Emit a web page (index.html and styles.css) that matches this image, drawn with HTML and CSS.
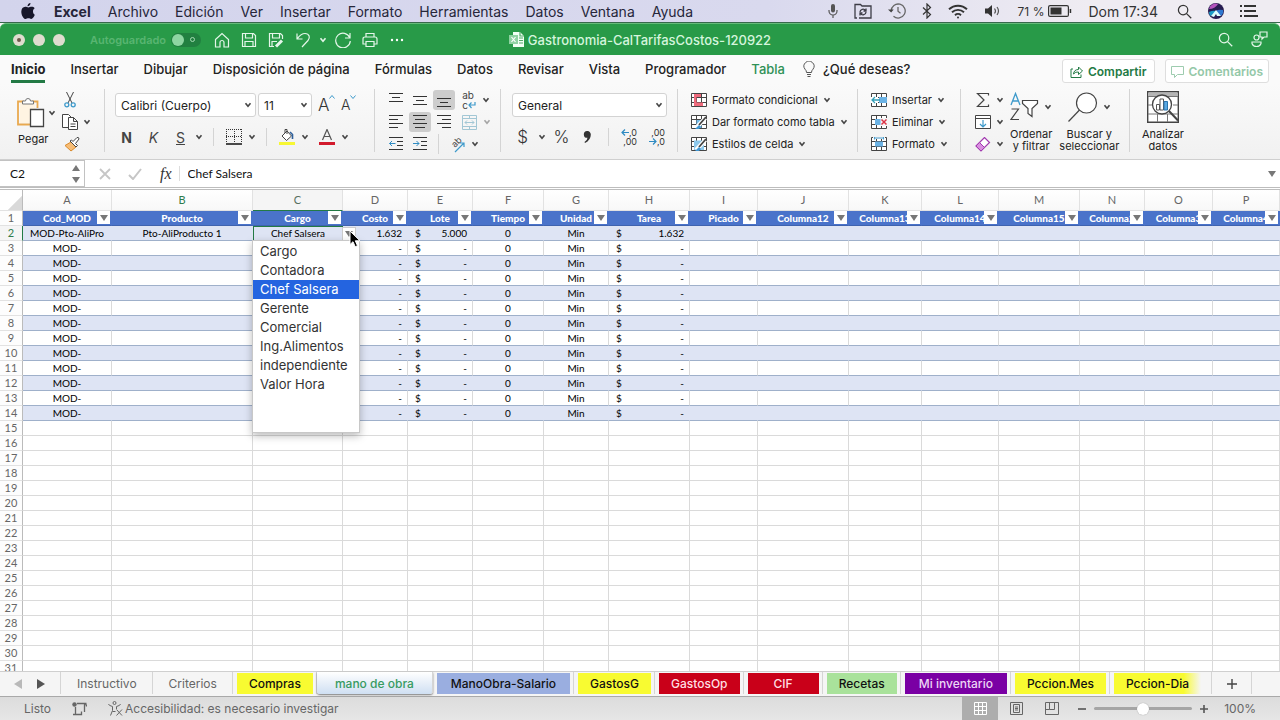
FILE: index.html
```html
<!DOCTYPE html>
<html lang="es">
<head>
<meta charset="utf-8">
<title>Gastronomia-CalTarifasCostos-120922</title>
<link rel="stylesheet" href="styles.css">
</head>
<body>
<svg class="defs" aria-hidden="true">
  <symbol id="chev" viewBox="0 0 8 6"><path d="M1.5 1.2 4 4.2 6.5 1.2" fill="none" stroke="currentColor" stroke-width="1.6"/></symbol>
  <symbol id="tri" viewBox="0 0 8 6"><path d="M0 0h8L4 6z" fill="currentColor"/></symbol>
  <symbol id="lens" viewBox="0 0 16 16"><g fill="none" stroke="currentColor" stroke-width="1.3"><circle cx="6.5" cy="6.5" r="5"/><path d="m10.200 10.200 5 5"/></g></symbol>
  <symbol id="table" viewBox="0 0 16 14"><path d="M.5.5h15v13H.5zM.5 4.500h15M.5 9.500h15M5.500.5v13M10.500.5v13" fill="#fff" stroke="#444"/></symbol>
</svg>

<nav class="menubar" aria-label="Barra de menús">
  <svg class="apple" viewBox="0 0 14 16" width="14" height="16"><path d="M9.500 0c.1 1.700-1.300 3.300-3 3.300C6.300 1.700 7.900.2 9.500 0zM12 8.400c0-1.500.8-2.500 1.700-3.100C12.900 4.200 11.800 3.800 10.800 3.800 9.300 3.800 8.300 4.500 7.400 4.500 6.500 4.500 5.400 3.800 4.200 3.800 2 3.900.3 5.700.3 8.700.3 12.300 2.800 16 4.600 16 5.600 16 6.200 15.300 7.500 15.300S9.200 16 10.200 16c1.500 0 2.900-2.200 3.600-4.200C12.700 11.200 12 10 12 8.400z" fill="#17172a"/></svg>
  <button class="app">Excel</button><button>Archivo</button><button>Edición</button><button>Ver</button><button>Insertar</button><button>Formato</button><button>Herramientas</button><button>Datos</button><button>Ventana</button><button>Ayuda</button>
  <div class="tray">
    <svg viewBox="0 0 10 14" width="10" height="14"><rect x="3" width="4" height="8.500" rx="2" fill="#555"/><path d="M1 6v1a4 4 0 0 0 8 0V6M5 11v3" fill="none" stroke="#555" stroke-width="1.200"/></svg>
    <svg viewBox="0 0 18 16" width="18" height="16" fill="none" stroke="#3c3c46" stroke-width="1.300"><path d="M3 15H1V1.500h5.500L8 3h9v12H5"/><path d="M6 9a3 3 0 0 1 5.500-1.500M12 9a3 3 0 0 1-5.500 1.500M12 5.500v2.500H9.500M6 12.500V10h2.500"/></svg>
    <svg viewBox="0 0 18 16" width="18" height="16" fill="none" stroke="#666" stroke-width="1.300"><path d="M3.200 8A7 7 0 1 1 5.500 13.200M10 4v4.300l2.500 2"/><path d="m0 6.500 3.200 3 2.500-3z" fill="#444" stroke="none"/></svg>
    <svg viewBox="0 0 10 16" width="10" height="16" fill="none" stroke="#333" stroke-width="1.200"><path d="m1 4.500 7.500 7L5 15V1l3.500 3.500L1 11.500"/></svg>
    <svg viewBox="0 0 20 15" width="20" height="15" fill="none" stroke="#333" stroke-width="1.900"><path d="M1 5.300a13 13 0 0 1 18 0M4 8.300a8.700 8.700 0 0 1 12 0M7 11.200a4.400 4.400 0 0 1 6 0"/><circle cx="10" cy="13.500" r="1" fill="#333" stroke="none"/></svg>
    <svg viewBox="0 0 18 14" width="18" height="14"><path d="M1 4.500h3L8 1v12L4 9.500H1z" fill="#333"/><path d="M10.500 4.500q2 2.500 0 5M13 3q3 4 0 8" fill="none" stroke="#555" stroke-width="1.200"/></svg>
    <span class="pct">71 %</span>
    <svg viewBox="0 0 24 12" width="24" height="12"><rect x=".6" y=".6" width="19.800" height="10.800" rx="1.500" fill="none" stroke="#333" stroke-width="1.200"/><path d="M2.500 2.500h11v7h-11zM21.700 4h1.500v4h-1.500z" fill="#333"/></svg>
    <span class="clock">Dom 17:34</span>
    <svg class="lens" width="15" height="15"><use href="#lens"/></svg>
    <svg viewBox="0 0 16 16" width="16" height="16"><circle cx="8" cy="8" r="8" fill="#271c50"/><path d="M1 6a7 7 0 0 1 9-5q-3 5-9 5z" fill="#b353bd"/><path d="M15 7q-5-1-7 1l5 5q3-3 2-6z" fill="#2f78d0"/><path d="M1 9q4-2 7-1l-5 5Q1 12 1 9z" fill="#1a9bc7"/><path d="m8 7 5 6H9l-1-2-2 3-3-1z" fill="#dff"/></svg>
    <svg viewBox="0 0 18 12" width="18" height="12"><path d="M0 1h2M0 6h2M0 11h2M4 1h12M4 6h12M4 11h14" stroke="#333" stroke-width="2"/></svg>
  </div>
</nav>

<div class="window">
<header class="titlebar">
  <div class="quick">
    <div class="lights"><button class="light edited" aria-label="Cerrar"></button><button class="light" aria-label="Minimizar"></button><button class="light" aria-label="Ampliar"></button></div>
    <span class="autosave">Autoguardado</span>
    <button class="toggle" role="switch" aria-checked="false" aria-label="Autoguardado"><span class="knob"></span><span class="off"></span></button>
    <div class="actions">
    <button aria-label="Inicio"><svg viewBox="0 0 16 16" width="16" height="16"><path d="M1.500 7.500 8 1.500l6.500 6V15H10v-4.500a2 2 0 0 0-4 0V15H1.500z"/></svg></button>
    <button aria-label="Guardar"><svg viewBox="0 0 16 16" width="16" height="16"><path d="M1.500 1.500h11l2 2v11h-13zM4.500 1.500v4.500h7V1.500M4 14.500V9.500h8v5"/></svg></button>
    <button aria-label="Guardar como"><svg viewBox="0 0 16 16" width="16" height="16"><path d="M6 14.500H1.500v-13h11l2 2V7M4.500 1.500v4.500h7V1.500M4 14V9.500h5"/><path d="m8 14.500 6-6" stroke-width="3"/></svg></button>
    <button aria-label="Deshacer"><svg viewBox="0 0 16 16" width="16" height="16"><path d="M2 1.500V7h5.500M2.300 6.700C5 3 7.500 1.500 10 1.500c4.500 0 5.500 4.500 3 7L7 15"/></svg></button>
    <button class="narrow" aria-label="Opciones de deshacer"><svg width="8" height="6"><use href="#chev"/></svg></button>
    <button aria-label="Rehacer"><svg viewBox="0 0 18 16" width="18" height="16"><path d="M16 1v5h-5M15.800 5.800A7.300 7.300 0 1 0 16.300 9"/></svg></button>
    <button aria-label="Imprimir"><svg viewBox="0 0 16 16" width="16" height="16"><path d="M4 5V1.500h8V5M4 12H1V7q0-2 2-2h10q2 0 2 2v5h-3M4 9.500h8v5H4z"/></svg></button>
    <button aria-label="Más"><svg viewBox="0 0 16 4" width="16" height="4"><g fill="#fff" stroke="none"><circle cx="3" cy="2" r="1.200"/><circle cx="8" cy="2" r="1.200"/><circle cx="13" cy="2" r="1.200"/></g></svg></button>
    </div>
  </div>
  <h1><svg viewBox="0 0 15 15" width="15" height="15"><path d="M4 0h7l4 4v11H4z" fill="#f1fff4"/><path d="M11 0v4h4M10 6h4M10 8.500h4M10 11h4" fill="none" stroke="#52a96a"/><path d="M0 3h9v9H0z" fill="#8fd2a2"/><path d="m2.500 5 4 5M6.500 5l-4 5" stroke="#fff"/></svg>Gastronomia-CalTarifasCostos-120922</h1>
  <div class="right">
    <button aria-label="Buscar"><svg width="15" height="15"><use href="#lens"/></svg></button>
    <button aria-label="Colaborar"><svg viewBox="0 0 17 17" width="17" height="17"><circle cx="5.500" cy="6.500" r="2.500"/><path d="M1 11h9v1.500q-1 3-4.500 3T1 12.500zM9 1h7v5h-3l-2 2V6H9z"/></svg></button>
  </div>
</header>

<nav class="tabs" aria-label="Cinta">
  <button class="current">Inicio</button><button>Insertar</button><button>Dibujar</button><button>Disposición de página</button><button>Fórmulas</button><button>Datos</button><button>Revisar</button><button>Vista</button><button>Programador</button><button class="context">Tabla</button>
  <button class="tell"><svg viewBox="0 0 12 16" width="12" height="16" fill="none" stroke="#555"><path d="M3.500 11.500q0-2-1.500-3.300a5 5 0 1 1 8 0Q8.500 9.500 8.500 11.500zM4 13.500h4M4.500 15.500h3"/></svg>¿Qué deseas?</button>
  <div class="share">
    <button><svg viewBox="0 0 13 13" width="13" height="13" fill="none" stroke="#237a45"><path d="M3 4H1v8.500h10V9.500M3.500 9Q4 4.500 8.500 4.500V2l4 4-4 3.500V7Q5.500 6.500 3.500 9z"/></svg>Compartir</button>
    <button class="dim"><svg viewBox="0 0 13 13" width="13" height="13" fill="none" stroke="#9dccaf"><path d="M.5 1.500h12v8h-6l-3 3v-3h-3z"/></svg>Comentarios</button>
  </div>
</nav>

<div class="ribbon">
  <section class="group clip">
    <button class="big"><span class="pic"><svg viewBox="0 0 28 31" width="28" height="31"><path d="M7 4.500H1v23h12M15 4.500h5.500V11" fill="none" stroke="#e9a94f" stroke-width="1.800"/><path d="M3 6h15v6h-5v14H3z" fill="#fff4e2"/><path d="M5.500 7V4h3a2.500 2.500 0 0 1 5 0h3v3z" fill="#fff" stroke="#777"/><path d="M13.500 12.500h13v17h-13z" fill="#fff" stroke="#444" stroke-width="1.300"/></svg><svg class="c" width="8" height="6"><use href="#chev"/></svg></span>Pegar</button>
    <div class="stack">
      <button aria-label="Cortar"><svg viewBox="0 0 12 16" width="12" height="16" fill="none"><path d="M2.500 0 8 11M9.500 0 4 11" stroke="#444"/><g stroke="#3e9acb" stroke-width="1.300"><circle cx="2.800" cy="12.800" r="2"/><circle cx="9.200" cy="12.800" r="2"/></g></svg></button>
      <button aria-label="Copiar"><svg viewBox="0 0 16 16" width="16" height="16" fill="#fff" stroke="#444"><path d="M6 13.500H.5V.5h6L9 3"/><path d="M6.500 3.500h5l4 4v8h-9zM11.500 3.500v4h4M8.500 10h5M8.500 12.500h5"/></svg><svg class="c" width="8" height="6"><use href="#chev"/></svg></button>
      <button aria-label="Copiar formato"><svg viewBox="0 0 16 16" width="16" height="16"><path d="M1 9.500 7 6l5 5-5 4z" fill="#f7bd76" stroke="#d98a2c"/><path d="m6 5 6 6 1.500-1.500-2-2L15 3q0-2-2-1.500L9 5.500 7.500 4z" fill="#fff" stroke="#444"/></svg></button>
    </div>
  </section>

  <section class="group font">
    <div class="line">
      <label class="pick face"><select aria-label="Fuente"><option>Calibri (Cuerpo)</option></select><svg width="8" height="6"><use href="#chev"/></svg></label>
      <label class="pick size"><select aria-label="Tamaño"><option>11</option></select><svg width="8" height="6"><use href="#chev"/></svg></label>
      <button class="grow" aria-label="Aumentar tamaño"><span class="cap">A</span><svg viewBox="0 0 6 4" width="6" height="4"><path d="m.5 3.500 2.500-3 2.500 3" fill="none" stroke="#3e9acb"/></svg></button>
      <button class="grow" aria-label="Reducir tamaño"><span class="cap small">A</span><svg viewBox="0 0 6 4" width="6" height="4"><path d="m.5.5 2.500 3 2.500-3" fill="none" stroke="#3e9acb"/></svg></button>
    </div>
    <div class="line marks">
      <button class="glyph bold">N</button><button class="glyph ital">K</button><button class="glyph under">S</button><button class="more" aria-label="Subrayados"><svg width="8" height="6"><use href="#chev"/></svg></button>
      <i class="bar"></i>
      <button aria-label="Bordes" class="pair"><svg viewBox="0 0 16 16" width="16" height="16"><path d="M.5 0v14M8.500 0v14M15.500 0v14M0 .5h16M0 7.500h16" stroke="#333" stroke-dasharray="1 1"/><path d="M0 15h16" stroke="#111" stroke-width="1.500"/></svg><svg width="8" height="6"><use href="#chev"/></svg></button>
      <i class="bar"></i>
      <button aria-label="Relleno" class="pair"><svg viewBox="0 0 16 17" width="16" height="17"><path d="M0 13h16v3H0z" fill="#f7f733"/><path d="m3 7 5-5 4.500 5-5 4.500zM6 4V.5h2V5" fill="#fff" stroke="#444"/><path d="M13.500 10V5.500L11 3" stroke="#2d5f9b" stroke-width="1.600" fill="none"/></svg><svg width="8" height="6"><use href="#chev"/></svg></button>
      <button aria-label="Color de fuente" class="pair"><svg viewBox="0 0 16 17" width="16" height="17"><path d="M0 13h16v3H0z" fill="#d21a2c"/><path d="m3.500 11 4.500-10.500L12.500 11M5.200 7.500h5.600" fill="none" stroke="#555" stroke-width="1.200"/></svg><svg width="8" height="6"><use href="#chev"/></svg></button>
    </div>
  </section>

  <section class="group align">
    <button aria-label="Arriba"><svg viewBox="0 0 14 14" width="14" height="14"><path d="M0 .5h14M3 4.500h8M0 8.500h14" stroke="#333"/></svg></button>
    <button aria-label="Medio"><svg viewBox="0 0 14 14" width="14" height="14"><path d="M0 3.500h14M3 7.500h8M0 11.500h14" stroke="#333"/></svg></button>
    <button class="on" aria-label="Abajo"><svg viewBox="0 0 14 14" width="14" height="14"><path d="M0 5.500h14M3 9.500h8M0 13.500h14" stroke="#333"/></svg></button>
    <button class="wrap pair" aria-label="Ajustar texto"><span class="abc"><span>ab</span><span>c<svg viewBox="0 0 8 7" width="8" height="7"><path d="M7 0v3H1M3.500.5 1 3l2.500 3" fill="none" stroke="#3e9acb" stroke-width="1.200"/></svg></span></span><svg width="8" height="6"><use href="#chev"/></svg></button>
    <button aria-label="Izquierda"><svg viewBox="0 0 14 14" width="14" height="14"><path d="M0 .5h14M0 4.500h9M0 8.500h14M0 12.500h9" stroke="#333"/></svg></button>
    <button class="on" aria-label="Centrar"><svg viewBox="0 0 14 14" width="14" height="14"><path d="M0 .5h14M2 4.500h10M0 8.500h14M2 12.500h10" stroke="#333"/></svg></button>
    <button aria-label="Derecha"><svg viewBox="0 0 14 14" width="14" height="14"><path d="M0 .5h14M5 4.500h9M0 8.500h14M5 12.500h9" stroke="#333"/></svg></button>
    <button class="pair faded" aria-label="Combinar"><svg viewBox="0 0 15 15" width="15" height="15" fill="none" stroke="#3e8fae"><path d="M.5.5h14v14H.5zM.5 3.500h14M.5 11.500h14M7.500.5v3M7.500 11.500v3M3 7.500h9M5 5.500l-2 2 2 2M10 5.500l2 2-2 2"/></svg><svg width="8" height="6"><use href="#chev"/></svg></button>
    <button aria-label="Reducir sangría"><svg viewBox="0 0 14 14" width="14" height="14"><path d="M0 .5h14M8 4.500h6M8 8.500h6M0 12.500h14" stroke="#333"/><path d="M6.500 6.500h-6M3 4 .5 6.500 3 9" fill="none" stroke="#2f8bc2"/></svg></button>
    <button aria-label="Aumentar sangría"><svg viewBox="0 0 14 14" width="14" height="14"><path d="M0 .5h14M8 4.500h6M8 8.500h6M0 12.500h14" stroke="#333"/><path d="M0 6.500h6M3.500 4 6 6.500 3.500 9" fill="none" stroke="#2f8bc2"/></svg></button>
    <button class="orient pair" aria-label="Orientación"><svg viewBox="0 0 18 18" width="18" height="18"><text x="0" y="0" transform="translate(8 13) rotate(-45)" font-size="9" fill="#444">ab</text><path d="M8 17 16.500 8.500M13 8h4v4" fill="none" stroke="#3e9acb" stroke-width="1.200"/></svg><svg width="8" height="6"><use href="#chev"/></svg></button>
  </section>

  <section class="group number">
    <label class="pick wide"><select aria-label="Formato de número"><option>General</option></select><svg width="8" height="6"><use href="#chev"/></svg></label>
    <div class="line">
      <button class="sym">$</button><button aria-label="Monedas"><svg width="8" height="6"><use href="#chev"/></svg></button><button class="sym">%</button><button aria-label="Millares" class="comma"><svg viewBox="0 0 8 12" width="8" height="12"><path d="M4 0a3.500 3.500 0 0 1 3.800 3.700Q7.800 9 2 12L1.500 11Q4.500 9 4.500 6.800A3.400 3.400 0 1 1 4 0z" fill="#333"/></svg></button>
      <i class="bar"></i>
      <button class="dec" aria-label="Más decimales"><span><svg viewBox="0 0 8 7" width="8" height="7"><path d="M8 3.500H1M4 .5l-3 3 3 3" fill="none" stroke="#2f8bc2" stroke-width="1.200"/></svg>,0</span><span>,00</span></button>
      <button class="dec" aria-label="Menos decimales"><span>,00</span><span><svg viewBox="0 0 8 7" width="8" height="7"><path d="M0 3.500h7M4 .5l3 3-3 3" fill="none" stroke="#2f8bc2" stroke-width="1.200"/></svg>,0</span></button>
    </div>
  </section>

  <section class="group list styles">
    <button><svg viewBox="0 0 16 14" width="16" height="14"><use href="#table"/><path d="M3 1h7v3H3zM3 9.500h9V13H3zM3 4h2.500v6H3z" fill="#ef6b7d"/></svg>Formato condicional<svg class="c" width="8" height="6"><use href="#chev"/></svg></button>
    <button><svg viewBox="0 0 16 14" width="16" height="14"><use href="#table"/><path d="M5.500 5h5v8h-5z" fill="#74bbe8"/><path d="m5 13 9.500-10" stroke="#fff" stroke-width="4"/><path d="m8 10 7-8" stroke="#444" stroke-width="1.800"/><path d="m4 14 4-4 2 2q-2 3-6 2z" fill="#3e97d4"/></svg>Dar formato como tabla<svg class="c" width="8" height="6"><use href="#chev"/></svg></button>
    <button><svg viewBox="0 0 16 14" width="16" height="14"><use href="#table"/><path d="M3 3.500h10V13H3z" fill="#8cc8ec"/><path d="m5 13 9.500-10" stroke="#fff" stroke-width="4"/><path d="m8 10 7-8" stroke="#444" stroke-width="1.800"/><path d="m4 14 4-4 2 2q-2 3-6 2z" fill="#3e97d4"/></svg>Estilos de celda<svg class="c" width="8" height="6"><use href="#chev"/></svg></button>
  </section>

  <section class="group list cells">
    <button><svg viewBox="0 0 16 14" width="16" height="14"><use href="#table"/><path d="M8 4h8v6H8z" fill="#6bb2e4"/><path d="M0 4h7v6H0z" fill="#fff"/><path d="M9 7H1M4 4 1 7l3 3" fill="none" stroke="#36a0b8" stroke-width="1.300"/></svg>Insertar<svg class="c" width="8" height="6"><use href="#chev"/></svg></button>
    <button><svg viewBox="0 0 16 14" width="16" height="14"><use href="#table"/><path d="M4 4h6v6H4z" fill="#6bb2e4"/><path d="M9.500 3H16v8H9.500z" fill="#f5f5f5"/><path d="m10.500 4.500 5 5M15.500 4.500l-5 5" stroke="#dc3446" stroke-width="1.500"/></svg>Eliminar<svg class="c" width="8" height="6"><use href="#chev"/></svg></button>
    <button><svg viewBox="0 0 16 14" width="16" height="14"><use href="#table"/><path d="M4 4.500h8v5H4z" fill="#6bb2e4"/><path d="M2 0h12v2H2z" fill="#f5f5f5"/><path d="M3.500 1h9M3.500 0v2.500M12.500 0v2.500" stroke="#4a9fd0"/></svg>Formato<svg class="c" width="8" height="6"><use href="#chev"/></svg></button>
  </section>

  <section class="group edit">
    <div class="stack">
      <button aria-label="Autosuma"><svg viewBox="0 0 16 16" width="16" height="16"><path d="M13.500 3.500V1.500H2.500L9 8l-6.500 6.500h11v-2" fill="none" stroke="#444" stroke-width="1.200"/></svg><svg class="c" width="8" height="6"><use href="#chev"/></svg></button>
      <button aria-label="Rellenar"><svg viewBox="0 0 16 14" width="16" height="14"><path d="M.5.500h15v13H.5zM.5 3.500h15" fill="#fff" stroke="#444"/><path d="M8 5v7M5 9l3 3 3-3" fill="none" stroke="#3e9acb" stroke-width="1.200"/></svg><svg class="c" width="8" height="6"><use href="#chev"/></svg></button>
      <button aria-label="Borrar"><svg viewBox="0 0 16 15" width="16" height="15"><path d="m1 9 8.500-8.500 5 5L6 14z" fill="#fff" stroke="#a23bb0" stroke-width="1.200"/><path d="m1 9 3.500-3.500 5 5L6 14z" fill="#d98fe0" stroke="#a23bb0"/></svg><svg class="c" width="8" height="6"><use href="#chev"/></svg></button>
    </div>
    <button class="big"><span class="pic"><svg viewBox="0 0 29 30" width="29" height="30" fill="none"><path d="m1 13 4.500-11.500L10 13M2.500 9h6" stroke="#3e9acb" stroke-width="1.300"/><path d="M1.500 17h7L1 27.500h8" stroke="#444" stroke-width="1.200"/><path d="M12.500 8.500h15v3l-5.500 5v8l-4-3v-5l-5.500-5z" fill="#fff" stroke="#444" stroke-width="1.200"/></svg><svg class="c" width="8" height="6"><use href="#chev"/></svg></span>Ordenar<br>y filtrar</button>
    <button class="big find"><span class="pic"><svg viewBox="0 0 30 30" width="30" height="30" fill="none" stroke="#444" stroke-width="1.200"><circle cx="18.500" cy="11" r="10" fill="#fff"/><path d="M11.500 18 .5 29.500"/></svg><svg class="c" width="8" height="6"><use href="#chev"/></svg></span>Buscar y<br>seleccionar</button>
  </section>

  <section class="group analyze">
    <button class="big"><span class="pic"><svg viewBox="0 0 32 32" width="32" height="32"><path d="M.7.7h30.600v30.600H.7z" fill="#fff" stroke="#444" stroke-width="1.400"/><path d="M1.500 1.500h29v3.500h-29z" fill="#b5b5b5"/><path d="M1 5.500h30M1 14h5M26 14h5M1 23h30M10.500 23v8M20.500 23v8" stroke="#777"/><circle cx="15" cy="13.500" r="9.500" fill="#fff" stroke="#444" stroke-width="1.300"/><path d="m22 20 9 9.500" stroke="#444" stroke-width="2"/><path d="M9.500 13.500h3V19h-3zM13 8h3.500v11H13z" fill="#fff" stroke="#555"/><path d="M17 10.500h3.500V19H17z" fill="#5aa9e2" stroke="#2b75af"/></svg></span>Analizar<br>datos</button>
  </section>
</div>

<div class="formula">
  <div class="namebox"><input value="C2" aria-label="Cuadro de nombres"><span class="spin"><svg class="up" width="8" height="6"><use href="#tri"/></svg><svg width="8" height="6"><use href="#tri"/></svg></span></div>
  <button aria-label="Cancelar"><svg viewBox="0 0 12 12" width="12" height="12"><path d="m1 1 10 10M11 1 1 11" stroke="#c6c6c6" stroke-width="1.800"/></svg></button>
  <button aria-label="Introducir"><svg viewBox="0 0 14 12" width="14" height="12"><path d="m1 7 4 4L13 1" fill="none" stroke="#c6c6c6" stroke-width="2"/></svg></button>
  <button class="fx">fx</button>
  <input class="entry" value="Chef Salsera" aria-label="Barra de fórmulas">
  <button class="expand" aria-label="Expandir"><svg width="8" height="6"><use href="#tri"/></svg></button>
</div>

<main class="sheet">
  <table>
    <colgroup><col class="rows"><col class="w89"><col class="w141"><col class="w90"><col class="w65"><col class="w65"><col class="w71"><col class="w65"><col class="w81"><col class="w68"><col class="w91"><col class="w73"><col class="w77"><col class="w81"><col class="w65"><col class="w68"><col></colgroup>
    <thead><tr id="letters"><th class="corner"></th></tr></thead>
    <tbody id="cells"></tbody>
  </table>
</main>

<template id="picker">
  <button class="drop" aria-label="Abrir lista"><svg width="8" height="6"><use href="#tri"/></svg></button>
  <ul class="menu" role="listbox" aria-label="Cargo">
    <li role="option">Cargo</li><li role="option">Contadora</li><li role="option" aria-selected="true">Chef Salsera</li><li role="option">Gerente</li><li role="option">Comercial</li><li role="option">Ing.Alimentos</li><li role="option">independiente</li><li role="option">Valor Hora</li>
  </ul>
  <svg class="cursor" viewBox="0 0 12 18" width="12" height="18"><path d="M1 1v13.500l3-2.800 2.200 5 2.300-1-2.200-4.900H11z" fill="#000" stroke="#fff"/></svg>
</template>

<nav class="sheets" aria-label="Hojas">
  <div class="arrows"><button class="off" aria-label="Anterior"><svg viewBox="0 0 8 10" width="8" height="10"><path d="M8 0v10L0 5z"/></svg></button><button aria-label="Siguiente"><svg viewBox="0 0 8 10" width="8" height="10"><path d="M0 0v10l8-5z"/></svg></button></div>
  <div class="tab"><button class="plain">Instructivo</button></div>
  <div class="tab"><button class="plain">Criterios</button></div>
  <div class="tab"><button class="yellow">Compras</button></div>
  <div class="tab active"><button>mano de obra</button></div>
  <div class="tab"><button class="blue">ManoObra-Salario</button></div>
  <div class="tab"><button class="yellow">GastosG</button></div>
  <div class="tab"><button class="red">GastosOp</button></div>
  <div class="tab"><button class="red cif">CIF</button></div>
  <div class="tab"><button class="green">Recetas</button></div>
  <div class="tab"><button class="purple">Mi inventario</button></div>
  <div class="tab"><button class="yellow">Pccion.Mes</button></div>
  <div class="tab last"><button class="yellow fade">Pccion-Dia</button></div>
  <div class="tab"><button class="add" aria-label="Nueva hoja"><svg viewBox="0 0 10 10" width="10" height="10"><path d="M5 0v10M0 5h10" stroke="#444" stroke-width="1.400"/></svg></button></div>
</nav>

<footer class="status">
  <span>Listo</span>
  <svg class="macro" viewBox="0 0 15 14" width="15" height="14"><circle cx="2.500" cy="2.500" r="2.200" fill="#666"/><path d="M5 1.500h9.500M12.500 1.500V10M3.500 5v7.500M1 12.500h8.500v-3M12.500 1.500q2 0 2 3" fill="none" stroke="#666" stroke-width="1.300"/></svg>
  <button class="access"><svg viewBox="0 0 15 15" width="15" height="15" fill="none" stroke="#666"><circle cx="6.500" cy="2" r="1.500"/><path d="M.5 3q0 1.500 4 2.500v4l-2 5M12.500 3q0 1.500-4 2.500v2.500M4.500 10.500h3M8.500 8.500l5.500 6M14 8.500l-5.500 6"/></svg>Accesibilidad: es necesario investigar</button>
  <div class="views">
    <button class="on" aria-label="Normal"><svg viewBox="0 0 13 13" width="13" height="13" fill="none" stroke="#fff"><path d="M.5.500h12v12H.5zM.5 4.500h12M.5 8.500h12M4.500.5v12M8.500.5v12"/></svg></button>
    <button aria-label="Diseño de página"><svg viewBox="0 0 13 13" width="13" height="13" fill="none" stroke="#666"><path d="M.5.500h12v12H.5zM3.500 2.500h6v8h-6zM5 5h3M5 6.500h3M5 8h3"/></svg></button>
    <button aria-label="Salto de página"><svg viewBox="0 0 14 13" width="14" height="13" fill="none" stroke="#666"><path d="M.5.500h13v12H.5zM4.500.5v7h5v-7M.5 7.500h4"/></svg></button>
  </div>
  <button class="zoom" aria-label="Alejar"><svg viewBox="0 0 8 8" width="8" height="8"><path d="M0 4h8" stroke="#555" stroke-width="1.600"/></svg></button>
  <input type="range" min="0" max="100" value="50" aria-label="Zoom">
  <button class="zoom" aria-label="Acercar"><svg viewBox="0 0 8 8" width="8" height="8"><path d="M0 4h8M4 0v8" stroke="#555" stroke-width="1.600"/></svg></button>
  <span class="level">100%</span>
</footer>
</div>
<script src="sheet.js"></script>
</body>
</html>
```

FILE: styles.css
```css
* { box-sizing: border-box; }
body { margin: 0; height: 100vh; display: flex; flex-direction: column; overflow: hidden; font-family: Inter, "Liberation Sans", sans-serif; font-size: 13px; color: #222; background: #d8d8ec; }
button { border: 0; padding: 0; margin: 0; background: none; font: inherit; color: inherit; display: flex; align-items: center; white-space: nowrap; }
input, select { font: inherit; color: inherit; border: 0; margin: 0; padding: 0; background: none; min-width: 0; }
svg { display: block; flex: none; }
.defs { position: absolute; width: 0; height: 0; }

.menubar { flex: none; height: 23px; display: flex; align-items: center; gap: 17px; padding: 0 22px 0 21px; font-size: 14px; color: #26263a; background: linear-gradient(90deg, #d3d4ec, #d9d9ee 60%, #efecf2 85%); border-bottom: 1px solid #37694c; }
.menubar .app { font-weight: 700; margin-left: 2px; }
.tray { margin-left: auto; display: flex; align-items: center; gap: 16px; color: #333; }
.pct { font-size: 12px; margin-right: -12px; }
.clock { margin-right: 3px; }

.window { flex: 1; min-height: 0; display: flex; flex-direction: column; background: #f6f6f6; }
.titlebar { flex: none; height: 32px; display: grid; grid-template-columns: 1fr auto 1fr; align-items: center; background: #289a48; border-top: 1px solid #65bb7b; border-radius: 6px 6px 0 0; color: #fff; }
.titlebar svg { fill: none; stroke: #e4f6e9; stroke-width: 1.200; color: #e4f6e9; }
.titlebar h1 { margin: 0; display: flex; align-items: center; gap: 4px; font-size: 13px; font-weight: 500; color: #d5f5dd; }
.titlebar h1 svg { stroke: none; }
.quick { display: flex; align-items: center; }
.lights { display: flex; gap: 8px; padding-left: 13px; }
.light { width: 12px; height: 12px; border-radius: 50%; background: #dfdccf; justify-content: center; }
.edited::after { content: ""; width: 4px; height: 4px; border-radius: 50%; background: #6c5a4a; }
.autosave { padding-left: 25px; font-size: 11px; font-weight: 600; color: #58b571; }
.toggle { width: 30px; height: 14px; margin-left: 5px; border-radius: 7px; background: #218040; gap: 6px; }
.knob { width: 12px; height: 12px; border-radius: 50%; background: #8ed6a2; margin-left: 1px; }
.off { width: 5px; height: 5px; border: 1px solid #a5d9b3; border-radius: 50%; }
.actions { display: flex; margin-left: 7px; }
.actions button { width: 27px; height: 22px; justify-content: center; }
.actions .narrow { width: 13px; }
.right { display: flex; justify-content: flex-end; gap: 18px; padding-right: 12px; }

.tabs { flex: none; height: 29px; display: flex; gap: 25px; padding: 0 11px; background: #fafafa; font-weight: 500; }
.tabs > button { height: 28px; padding-top: 3px; border-bottom: 3px solid transparent; }
.tabs .current { font-weight: 700; border-color: #237a45; }
.tabs .context { color: #2f9156; }
.tabs .tell { gap: 8px; margin-left: -7px; }
.share { margin-left: auto; display: flex; gap: 10px; padding-top: 4px; }
.share button { height: 24px; gap: 5px; padding: 0 7px; font-size: 12px; font-weight: 600; color: #237a45; background: #fff; border: 1px solid #dedede; border-radius: 3px; }
.share .dim { color: #94c8a8; padding: 0 5px; }

.ribbon { flex: none; height: 76px; display: flex; padding-top: 5px; background: linear-gradient(#fafafa, #f1f1f1); border-bottom: 1px solid #cfcfcf; font-size: 11px; color: #222; }
.ribbon use { color: #444; }
.group { flex: none; height: 63px; display: flex; border-right: 1px solid #d4d4d4; }
.group:last-child { border: 0; }
.stack { display: grid; grid-template-rows: repeat(3, 22px); }
.stack button { gap: 5px; }
.big { height: 63px; line-height: 12px; text-align: center; display: block; }
.pic { display: flex; align-items: center; justify-content: center; gap: 5px; height: 35px; margin-bottom: 4px; }
.clip { width: 105px; padding-left: 15px; gap: 7px; }
.clip .stack button:not(:nth-child(2)) { padding-left: 2px; }
.clip .big { text-align: left; padding-left: 3px; line-height: 10px; margin-top: -1px; }
.clip .pic { width: 37px; gap: 3px; }
.font { width: 270px; padding: 4px 10px; flex-direction: column; gap: 9px; }
.line { display: flex; align-items: center; height: 24px; }
.pick { flex: none; display: grid; height: 24px; align-items: center; background: #fff; border: 1px solid #d3d3d3; border-radius: 3px; font-size: 12px; }
.pick select { grid-area: 1 / 1; appearance: none; padding-left: 5px; height: 22px; }
.pick svg { grid-area: 1 / 1; justify-self: end; margin-right: 3px; }
.face { width: 141px; }
.size { width: 54px; margin: 0 6px 0 2px; }
.grow { width: 27px; align-items: flex-start; }
.cap { font-size: 17px; line-height: 20px; font-weight: 300; color: #333; }
.small { font-size: 14px; }
.marks { gap: 10px; padding-left: 3px; }
.glyph { width: 17px; justify-content: center; font-size: 14px; color: #444; }
.more { margin-left: -4px; }
.bold { font-weight: 700; }
.ital { font-style: italic; }
.under { text-decoration: underline; }
.pair { gap: 6px; }
.bar { width: 1px; height: 18px; background: #d4d4d4; }
.marks .bar { margin-right: 2px; }
.align { width: 126px; display: grid; grid-template: repeat(3, 22px) / 24px 24px 24px 40px; padding-left: 9px; align-content: start; }
.align button { justify-content: center; height: 20px; align-self: center; }
.align .on { background: #cdcdcd; border-radius: 3px; margin: 0 1px; }
.abc { display: grid; font-size: 10px; line-height: 10px; text-align: left; color: #444; }
.abc span { display: flex; align-items: center; }
.faded { opacity: .45; }
.orient { grid-column: 3 / 5; margin: 0 9px 0 6px; border-left: 1px solid #d4d4d4; }
.number { width: 177px; padding: 4px 11px; flex-direction: column; gap: 9px; }
.wide { width: 155px; }
.number .line { gap: 8px; padding-left: 3px; }
.sym { width: 15px; justify-content: center; font-size: 17px; font-weight: 300; color: #333; }
.sym + .comma { padding: 0 9px 0 6px; }
.dec { flex-direction: column; align-items: flex-end; font-size: 9px; line-height: 9px; color: #333; width: 18px; margin-left: 2px; }
.dec span { display: flex; align-items: center; }
.list { display: grid; grid-template-rows: repeat(3, 22px); align-content: start; padding-left: 13px; }
.list button { gap: 5px; }
.styles { width: 180px; }
.cells { width: 103px; }
.edit { width: 169px; padding-left: 14px; }
.edit .big { margin-left: 6px; }
.edit .find { margin-left: 7px; }
.analyze { padding-left: 12px; }

.formula { flex: none; height: 30px; display: flex; align-items: center; background: #fff; border-bottom: 3px double #bdbdbd; font-family: Lato, "Liberation Sans", sans-serif; font-size: 12px; color: #111; }
.namebox { width: 85px; height: 27px; display: flex; align-items: center; justify-content: space-between; padding: 0 4px 0 10px; border: 1px solid #c2c2c2; border-left: 0; margin-right: 14px; }
.namebox input { width: 50px; }
.spin { display: grid; gap: 6px; color: #777; }
.up { transform: rotate(180deg); }
.formula > button { margin-right: 17px; }
.formula .fx { margin: 0 0 0 -5px; padding: 0 7px 0 6px; font: italic 16px "Liberation Serif", serif; color: #333; border-right: 1px solid #ddd; height: 15px; }
.entry { flex: 1; padding-left: 8px; }
.formula .expand { margin-right: 4px; color: #777; }

.sheet { flex: 1; min-height: 0; overflow: hidden; background: #fff; }
table { width: 100%; min-width: 1270px; table-layout: fixed; border-collapse: separate; border-spacing: 0; font-family: Lato, "Liberation Sans", sans-serif; font-size: 10px; line-height: 14px; color: #000; }
.rows { width: 23px; } .w65 { width: 65px; } .w68 { width: 68px; } .w71 { width: 71px; } .w73 { width: 73px; } .w77 { width: 77px; } .w81 { width: 81px; } .w89 { width: 89px; } .w90 { width: 90px; } .w91 { width: 91px; } .w141 { width: 141px; }
th, td { height: 15px; padding: 0; text-align: center; white-space: nowrap; border-right: 1px solid #dadada; border-bottom: 1px solid #dadada; }
thead th { height: 21px; font-size: 11px; font-weight: 400; color: #666; background: linear-gradient(#fff, #f8f8f8); border-color: #e2e2e2; }
thead .sel, tbody .sel { color: #2f7c4c; }
thead .sel.pick-col { border-bottom-color: #237a45; color: #58705f; background: #f5f5f5; }
thead .corner { background: linear-gradient(135deg, transparent 66%, #d9d9d9 67%); border-right-color: #bbb; }
.num { font-size: 11px; font-weight: 400; color: #666; border-color: #e2e2e2; border-right-color: #bbb; background: #fdfdfd; }
tbody .num.sel { border-right-color: #237a45; background: #f5f5f5; }
.head td { position: relative; overflow: hidden; color: #fff; font-weight: 900; background: #4a73ca; border-color: #4a73ca; border-bottom-color: #3f63af; }
.filter { position: absolute; right: 1px; top: 0; width: 13px; height: 13px; background: #fff; justify-content: center; color: #777; }
.data td { border-bottom-color: #9fb0ca; }
.band td { background: #dee4f4; border-right-color: #dee4f4; }
.money span { display: flex; justify-content: space-between; padding: 0 5px 0 7px; }
.data .target { position: relative; border: 1px solid #237a45; line-height: 13px; }
.drop { position: absolute; left: 100%; top: 0; width: 14px; height: 14px; background: #fff; border: 1px solid #ccc; color: #777; justify-content: center; z-index: 1; }
.menu { position: absolute; left: -2px; top: 100%; z-index: 2; width: 108px; height: 193px; margin: 0; padding: 1px 0; list-style: none; text-align: left; background: #fff; border: 1px solid #c8c8c8; box-shadow: 0 3px 8px #0004; font: 13px/19px Inter, "Liberation Sans", sans-serif; color: #333; }
.menu li { padding-left: 7px; }
.menu [aria-selected] { background: #2464e0; color: #fff; }
.cursor { position: absolute; left: 95px; top: 3px; z-index: 3; }

.sheets { flex: none; height: 26px; display: flex; background: #f5f5f5; border-top: 1px solid #cfcfcf; border-bottom: 1px solid #a9a9a9; font-size: 12px; font-weight: 500; color: #111; }
.arrows { width: 61px; display: flex; gap: 15px; padding-left: 14px; border-right: 1px solid #d5d5d5; height: 22px; fill: #555; }
.arrows button { height: 24px; }
.arrows .off { width: auto; border: 0; border-radius: 0; fill: #b9b9b9; }
.tab { height: 22px; padding: 1px 3px 0 4px; border-right: 1px solid #d5d5d5; }
.tab button { height: 21px; padding: 0 12px; }
.tab .plain { color: #666; font-weight: 400; }
.yellow { background: #f8fb31; }
.tab .blue { background: #9aaee0; padding: 0 14px; }
.tab .red { background: #c90019; color: #ffdfe2; }
.tab .cif { padding: 0 26px; }
.tab .green { background: #a9e29b; }
.tab .purple { background: #7a00a4; color: #ecd6f5; padding: 0 14px; }
.tab .fade { background: linear-gradient(90deg, #f8fb31 80%, #f5f5f5); }
.tab.last { padding-right: 10px; }
.tab .add { padding: 0 11px; }
.tab.active { height: 22px; padding: 1px 17px 0; color: #379b61; background: linear-gradient(#fff, #cfdff2); border-radius: 0 0 3px 3px; box-shadow: 0 1px 2px #777; }
.active button { padding: 0; }
.tab.active button { padding: 0 1px; }

.status { flex: none; height: 23px; display: flex; align-items: center; padding: 0 24px; background: linear-gradient(#dcdcdc, #e6e6e6); font-size: 12px; color: #666; }
.macro { margin: 0 21px; }
.access { gap: 2px; }
.views { margin-left: auto; display: flex; align-self: stretch; }
.views button { width: 36px; justify-content: center; }
.views .on { background: #adadad; }
.zoom { padding: 0 8px; }
.status input { appearance: none; width: 98px; height: 3px; border-radius: 2px; background: #a5a5a5; }
.status input::-webkit-slider-thumb { appearance: none; width: 12px; height: 12px; border-radius: 50%; background: #fff; box-shadow: 0 0 1px #888; }
.level { padding-left: 8px; }
```

FILE: sheet.js
```js
const titles = ["Cod_MOD", "Producto", "Cargo", "Costo", "Lote", "Tiempo", "Unidad", "Tarea", "Picado", "Columna12", "Columna13", "Columna14", "Columna15", "Columna2", "Columna3", "Columna4"];
const letters = "ABCDEFGHIJKLMNOP".split("");
const first = ["MOD-Pto-AliPro", "Pto-AliProducto 1", "Chef Salsera", "$1.632", "$5.000", "0", "Min", "$1.632"];
const blank = ["MOD-", "", "", "$-", "$-", "0", "Min", "$-"];

const letterRow = document.getElementById("letters");
letters.forEach((letter, i) => {
  const th = document.createElement("th");
  th.textContent = letter;
  if (i === 1) th.className = "sel";
  if (i === 2) th.className = "sel pick-col";
  letterRow.append(th);
});

const body = document.getElementById("cells");
for (let n = 1; n <= 31; n++) {
  const row = body.insertRow();
  const num = document.createElement("th");
  num.className = n === 2 ? "num sel" : "num";
  num.textContent = n;
  row.append(num);
  if (n === 1) row.className = "head";
  else if (n <= 14) row.className = n % 2 ? "data" : "data band";
  const values = n === 1 ? titles : n === 2 ? first : n <= 14 ? blank : [];
  letters.forEach((_, i) => {
    const cell = row.insertCell();
    const value = values[i] || "";
    if (value[0] === "$") {
      // The currency sign sits at the left edge, the amount at the right.
      cell.className = "money";
      cell.innerHTML = `<span><data>$</data><data>${value.slice(1)}</data></span>`;
    } else {
      cell.textContent = value;
    }
    if (n === 1) cell.insertAdjacentHTML("beforeend", `<button class="filter" aria-label="Filtrar ${value}"><svg width="8" height="6"><use href="#tri"/></svg></button>`);
    if (n === 2 && i === 2) {
      cell.className = "target";
      cell.append(document.getElementById("picker").content.cloneNode(true));
    }
  });
}
```
